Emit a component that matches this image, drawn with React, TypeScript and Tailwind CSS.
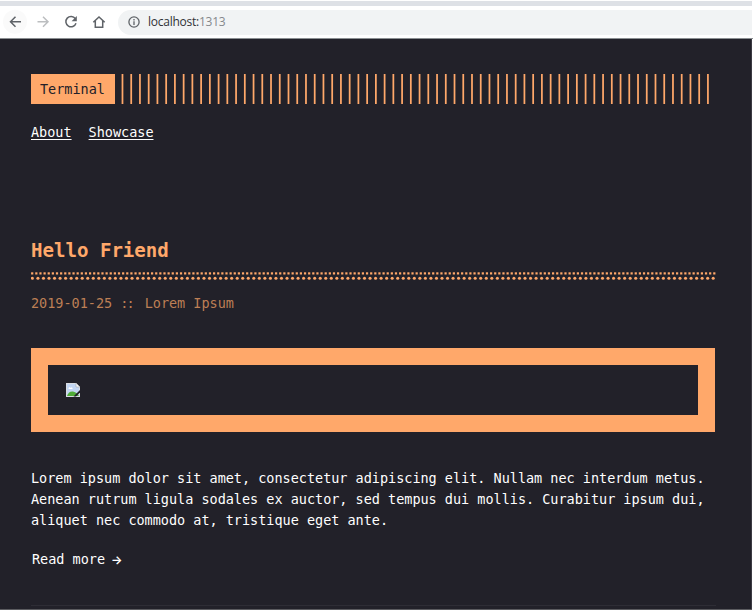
import React from "react";

const MONO = "font-['DejaVu_Sans_Mono',monospace]";

function Toolbar() {
  return (
    <div className="flex h-[39px] flex-col border-b border-[#8b8f92] bg-white pt-px">
      <div className="mr-px h-[5px] shrink-0 bg-[#dee1e6]" />
      <div className="mr-px flex h-8 items-center text-[#5f6368]">
        <svg width="118" height="32" fill="none" stroke="#5f6368" strokeWidth="1.5">
          <circle cx="15" cy="15.8" r="12" fill="#fafafa" stroke="none" />
          <path d="M21 15.8H10.5M15.5 10.8l-5 5 5 5" />
          <path d="M37.5 15.8H48M43 10.8l5 5-5 5" stroke="#bcbec0" />
          <path d="M75.3 12.6A5.2 5.2 0 1 0 76 17.3" />
          <path d="M76.8 10v5.2h-5.2z" fill="#5f6368" stroke="none" />
          <path d="M93.3 16.2l5.7-5.3 5.7 5.3M95.3 14.8v6.4h7.4v-6.4" />
        </svg>
        <div className="flex h-[25px] flex-1 items-center rounded-l-full bg-[#f1f3f4] pl-[10px]">
          <svg width="12" height="12" fill="none" stroke="#5f6368" strokeWidth="1.3">
            <circle cx="6" cy="6" r="5.1" />
            <path d="M6 5.3v3.6M6 3v1.4" />
          </svg>
          <span className="ml-2 font-['Open_Sans',sans-serif] text-[12px] leading-4 tracking-[-0.25px] text-[#303236]">
            localhost:<span className="text-[#85888c]">1313</span>
          </span>
        </div>
      </div>
    </div>
  );
}

function Stripes() {
  return (
    <svg className="ml-[6px]" width="594" height="30" fill="#ffa86a">
      {Array.from({ length: 68 }, (_, i) => (
        <rect key={i} x={0.6 + i * 8.738} y="0" width="1.75" height="30" />
      ))}
    </svg>
  );
}

function DottedRule() {
  return (
    <svg className="mt-[7px] block shrink-0" width="685" height="10" fill="#ffa86a">
      {Array.from({ length: 166 }, (_, i) => (
        <rect key={i} x={0.1 + i * 4.134} y="1.3" width="2.2" height="2.2" />
      ))}
      {Array.from({ length: 124 }, (_, i) => (
        <circle key={i} cx={1.4 + i * 5.535} cy="7.3" r="1.55" />
      ))}
    </svg>
  );
}

function BrokenImage() {
  return (
    <svg width="14" height="14">
      <path d="M0 0h10l4 4v10H0z" fill="#d9dde2" />
      <path d="M1 1h8.5L13 4.5V13H1z" fill="#c3d6f3" />
      <path d="M2.5 6c0-2 1.5-2 2-1 1-1 2.5 0 2 1z" fill="#fff" />
      <path d="M1 13c1-3 3-5 6-4.5 3 .5 5 2.5 6 4.5z" fill="#50ac38" />
      <path d="M10 0v4h4z" fill="#f8f8f8" stroke="#a5a8ab" strokeWidth=".6" />
      <path d="M14 7v2.5L10 13.5H7.5z" fill="#222129" />
    </svg>
  );
}

export default function App() {
  return (
    <div className="flex h-[612px] w-[753px] flex-col overflow-hidden bg-white">
      <Toolbar />
      <div className={`${MONO} mr-px flex h-[570px] flex-col border-r border-[#3c3b43] bg-[#222129] pl-[31px] pt-[35px] text-[13.5px] leading-[21px] tracking-[-0.013px] text-white`}>
        <header className="flex h-[30px]">
          <div className="flex w-[84px] items-center bg-[#ffa86a] pl-[9px] text-[#222129]">Terminal</div>
          <Stripes />
        </header>
        <nav className="mt-[18px] flex gap-[17px]">
          <a className="underline underline-offset-2">About</a>
          <a className="underline underline-offset-2">Showcase</a>
        </nav>
        <h1 className="mt-[95px] text-[19.1px] font-bold leading-[26px] text-[#ffa86a]">Hello Friend</h1>
        <DottedRule />
        <div className="mt-[12px] whitespace-pre text-[#bd7f55]">
          2019-01-25 <span className="tracking-[-2px]">:</span><span className="mr-[2px]">:</span> Lorem Ipsum
        </div>
        <div className="mt-[34px] flex h-[84px] w-[684px] items-center border-[17.5px] border-[#ffa86a] pl-[17.5px]">
          <BrokenImage />
        </div>
        <p className="mt-[36px] whitespace-pre">
          Lorem ipsum dolor sit amet, consectetur adipiscing elit. Nullam nec interdum metus.<br />
          Aenean rutrum ligula sodales ex auctor, sed tempus dui mollis. Curabitur ipsum dui,<br />
          aliquet nec commodo at, tristique eget ante.
        </p>
        <a className="ml-px mt-[18px] flex h-[21px] items-baseline gap-[6px]">
          <span>Read more</span>
          <span className="font-['Inter',sans-serif] text-[12px] font-semibold leading-none">→</span>
        </a>
        <div className="mt-[35px] h-px w-[685px] bg-[#2e2d35]" />
      </div>
      <div className="h-px w-[752px] bg-[#5c5c60]" />
    </div>
  );
}
